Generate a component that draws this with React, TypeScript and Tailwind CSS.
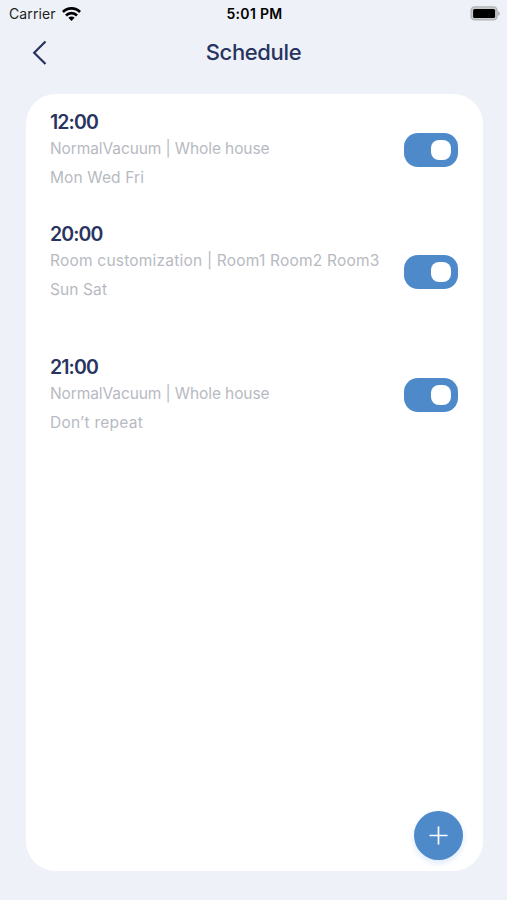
const schedules = [
  {
    time: "12:00",
    detail: "NormalVacuum | Whole house",
    days: "Mon Wed Fri",
    top: "pt-[22px]",
    detailSpacing: "tracking-[-0.1px]",
    daysSpacing: "tracking-[0.12px]"
  },
  {
    time: "20:00",
    detail: "Room customization | Room1 Room2 Room3",
    days: "Sun Sat",
    top: "pt-[12px]",
    detailSpacing: "tracking-[0.21px]",
    daysSpacing: "tracking-[0.1px]"
  },
  {
    time: "21:00",
    detail: "NormalVacuum | Whole house",
    days: "Don’t repeat",
    top: "pt-[22px]",
    detailSpacing: "tracking-[-0.1px]",
    daysSpacing: "tracking-[0.24px]"
  }
];

function StatusBar() {
  return (
    <div className="grid h-[27px] grid-cols-3 items-center pr-[7px] pl-[9px] text-black">
      <div className="flex items-center gap-[6px]">
        <span className="text-[14px] tracking-[0.1px] text-[#222]">Carrier</span>
        <svg width="19" height="14" viewBox="0 0 19 14" fill="none" stroke="currentColor" strokeWidth="2.7">
          <path d="M0.9 5a12 12 0 0 1 17.2 0" />
          <path d="M4 8.5a7.7 7.7 0 0 1 11 0" />
          <path d="M9.5 13.9 6.4 10.8a4.4 4.4 0 0 1 6.2 0Z" fill="currentColor" stroke="none" />
        </svg>
      </div>
      <p className="text-center text-[14px] font-semibold tracking-[0.3px]">5:01 PM</p>
      <svg className="justify-self-end" width="30" height="15" viewBox="0 0 30 15">
        <rect x="1.1" y="0.9" width="26" height="13" rx="3.6" fill="#c9cacc" stroke="#b0b1b3" strokeWidth="1.3" />
        <rect x="3.1" y="2.9" width="22" height="9" rx="1.5" fill="#000" />
        <path d="M28.2 5.2c1 .4 1.5 1.3 1.5 2.3s-.5 1.9-1.5 2.3Z" fill="#a6a7a9" />
      </svg>
    </div>
  );
}

function Toggle() {
  return (
    <button
      type="button"
      role="switch"
      aria-checked="true"
      aria-label="Enabled"
      className="flex h-[34px] w-[54px] shrink-0 items-center justify-end rounded-[14px] bg-[#4e8aca] pr-[7px]"
    >
      <span className="size-5 rounded-lg bg-white" />
    </button>
  );
}

export default function App() {
  return (
    <main className="flex h-[900px] flex-col bg-[#eef2f8] font-['Inter',sans-serif]">
      <StatusBar />
      <header className="grid h-[67px] grid-cols-[80px_1fr_80px] items-start">
        <button type="button" aria-label="Back" className="mt-[13px] ml-[32px] w-4 text-[#28345f]">
          <svg width="16" height="25" viewBox="0 0 16 25" fill="none" stroke="currentColor" strokeWidth="2.2">
            <path d="M13.5 1.5 2.2 12.8 13.5 24" />
          </svg>
        </button>
        <h1 className="mt-[11px] text-center text-[22px] leading-[28px] font-medium tracking-[-0.35px] text-[#28345f]">
          Schedule
        </h1>
      </header>

      <section className="relative mr-[24px] ml-[26px] flex h-[777px] flex-col rounded-[30px] bg-white pr-[25px] pl-[24px]">
        {schedules.map((item) => (
          <div key={item.time} className="flex h-[122.5px] justify-between first:-mt-[5.5px]">
            <div className={item.top}>
              <p className="text-[19.5px] leading-[22px] font-semibold tracking-[-0.9px] text-[#28345f]">{item.time}</p>
              <p
                className={`mt-[4px] text-[15.5px] leading-[23px] whitespace-nowrap text-[#b7bac2] ${item.detailSpacing}`}
              >
                {item.detail}
              </p>
              <p className={`mt-[7px] text-[15.5px] leading-[22px] text-[#b7bac2] ${item.daysSpacing}`}>{item.days}</p>
            </div>
            <div className="self-center">
              <Toggle />
            </div>
          </div>
        ))}
        <button
          type="button"
          aria-label="Add schedule"
          className="absolute right-[20px] bottom-[11px] flex size-[49px] items-center justify-center rounded-full bg-[#4e8aca] text-white shadow-[0_3px_6px_#dce9fa]"
        >
          <svg width="19" height="19" viewBox="0 0 19 19" stroke="currentColor" strokeWidth="1.7">
            <path d="M9.5 0.5v18M0.5 9.5h18" />
          </svg>
        </button>
      </section>
    </main>
  );
}
